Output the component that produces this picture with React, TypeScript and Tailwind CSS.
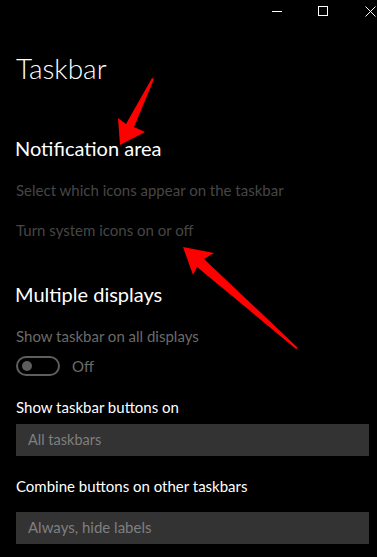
export default function App() {
  return (
    <div
      className="relative w-[377px] h-[557px] bg-black overflow-hidden text-white"
      style={{ fontFamily: '"Segoe UI", Lato, "Noto Sans", sans-serif' }}
    >
      {/* title bar */}
      <div className="flex justify-end items-center h-[22px] pr-[1px]">
        <div className="w-[10px] h-px bg-white" />
        <div className="w-[10px] h-[10px] border border-white ml-[36px]" />
        <svg className="ml-[37px]" width="11" height="11" viewBox="0 0 11 11" stroke="white" strokeWidth="1">
          <path d="M0.5 0.5 L10.5 10.5 M10.5 0.5 L0.5 10.5" />
        </svg>
      </div>

      <div className="pl-4 pr-2">
        <h1 className="text-[28px] font-light leading-[36px] mt-[28px]">Taskbar</h1>

        <h2 className="text-[20px] leading-[28px] mt-[48px] -ml-px">Notification area</h2>
        <p className="text-[15px] leading-[20px] mt-[18px] text-[#464646]">
          Select which icons appear on the taskbar
        </p>
        <p className="text-[15px] leading-[20px] mt-[20px] text-[#464646]">
          Turn system icons on or off
        </p>

        <h2 className="text-[20px] leading-[28px] mt-[40px] -ml-px">Multiple displays</h2>
        <p className="text-[15px] leading-[20px] mt-[18px] text-[#6b6b6b]">
          Show taskbar on all displays
        </p>
        <div className="flex items-center gap-3 mt-[9px]">
          <div className="w-[44px] h-[20px] rounded-full border-2 border-[#5e5e5e] flex items-center pl-[4px]">
            <div className="w-[10px] h-[10px] rounded-full bg-[#5e5e5e]" />
          </div>
          <span className="text-[15px] text-[#6b6b6b]">Off</span>
        </div>

        <p className="text-[15px] leading-[20px] mt-[19px]">Show taskbar buttons on</p>
        <div className="h-[32px] bg-[#333333] mt-[7px] flex items-center px-3 text-[14.5px] text-[#7f7f7f]">
          All taskbars
        </div>

        <p className="text-[15px] leading-[20px] mt-[20px]">Combine buttons on other taskbars</p>
        <div className="h-[32px] bg-[#333333] mt-[16px] flex items-center px-3 text-[15px] text-[#7f7f7f]">
          Always, hide labels
        </div>
      </div>

      {/* annotation arrows */}
      <svg className="absolute inset-0 pointer-events-none" width="377" height="557" viewBox="0 0 377 557">
        <polygon fill="#ff0000" points="154,79 134,127 145,132 120,145 118,118 126,124 152,78" />
        <polygon fill="#ff0000" points="183,247 214,253 204,259 298,348 296,349 197,267 193,275" />
      </svg>
    </div>
  );
}
